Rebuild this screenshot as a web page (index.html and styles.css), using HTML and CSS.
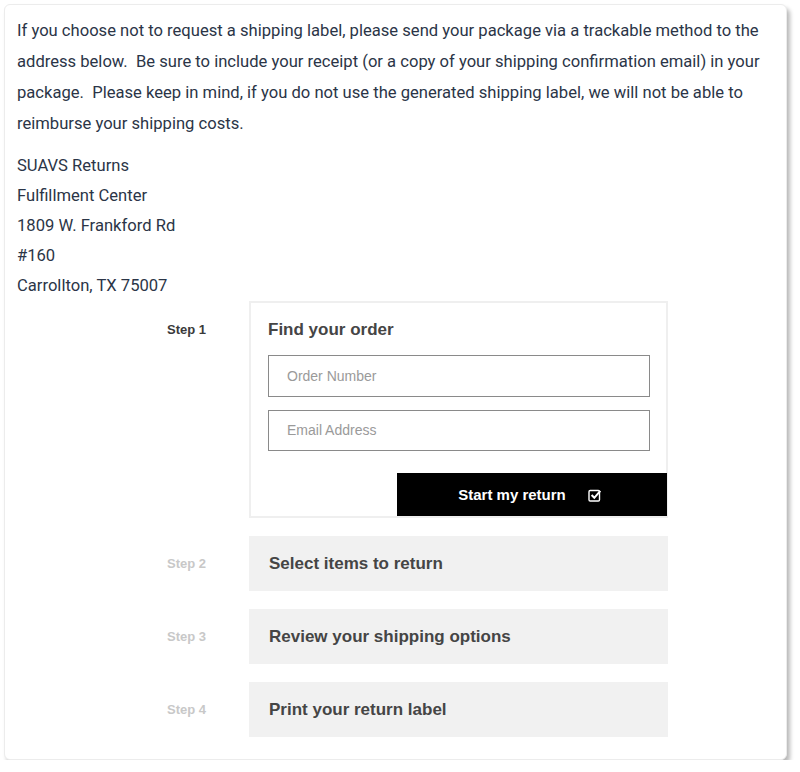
FILE: index.html
```html
<!DOCTYPE html>
<html>
<head>
<meta charset="utf-8">
<link rel="stylesheet" href="styles.css">
</head>
<body>
<div class="card">
  <p class="intro">If you choose not to request a shipping label, please send your package via a trackable method to the address below.&nbsp; Be sure to include your receipt (or a copy of your shipping confirmation email) in your package.&nbsp; Please keep in mind, if you do not use the generated shipping label, we will not be able to reimburse your shipping costs.</p>
  <p class="address">SUAVS Returns<br>Fulfillment Center<br>1809 W. Frankford Rd<br>#160<br>Carrollton, TX 75007</p>
  <div class="steps">
    <div class="step active">
      <div class="step-label">Step 1</div>
      <div class="step-box">
        <div class="step-title">Find your order</div>
        <div class="field">Order Number</div>
        <div class="field">Email Address</div>
        <div class="btn-row">
          <div class="btn">Start my return
            <svg class="chk" width="14" height="14" viewBox="0 0 14 14"><rect x="1" y="2.5" width="10.5" height="10.5" rx="1.2" fill="none" stroke="#fff" stroke-width="1.4"/><path d="M3.6 7 L6.3 9.8 L12.3 2.8" fill="none" stroke="#fff" stroke-width="2"/></svg>
          </div>
        </div>
      </div>
    </div>
    <div class="step">
      <div class="step-label">Step 2</div>
      <div class="step-box">
        <div class="step-title">Select items to return</div>
      </div>
    </div>
    <div class="step">
      <div class="step-label">Step 3</div>
      <div class="step-box">
        <div class="step-title">Review your shipping options</div>
      </div>
    </div>
    <div class="step">
      <div class="step-label">Step 4</div>
      <div class="step-box">
        <div class="step-title">Print your return label</div>
      </div>
    </div>
  </div>
</div>
</body>
</html>
```

FILE: styles.css
```css
html, body {
  margin: 0;
  padding: 0;
  background: #fff;
}
body {
  padding: 4px 0 0 4px;
}
.card {
  width: 783px;
  height: 756px;
  box-sizing: border-box;
  background: #fff;
  border: 1px solid #ececec;
  border-radius: 6px;
  box-shadow: 3px 4px 4px rgba(0, 0, 0, 0.28);
  padding: 10px 12px 0 12px;
  font-family: Roboto, "Liberation Sans", sans-serif;
  color: #2b3547;
}
.intro {
  margin: 0;
  font-size: 16.6px;
  line-height: 31px;
}
.address {
  margin: 12px 0 0;
  font-size: 16.6px;
  line-height: 30px;
}
.steps {
  margin: 0 0 0 150px;
  display: flex;
  flex-direction: column;
  gap: 18px;
  font-family: "Liberation Sans", Arial, sans-serif;
}
.step {
  display: flex;
}
.step-label {
  width: 82px;
  font-size: 13px;
  font-weight: bold;
  color: #c8c8c8;
  align-self: center;
}
.step.active .step-label {
  align-self: flex-start;
  padding-top: 21px;
  color: #3a3a3a;
}
.step-box {
  width: 419px;
  height: 55px;
  box-sizing: border-box;
  background: #f1f1f1;
  padding: 0 18px 0 20px;
  display: flex;
  flex-direction: column;
  justify-content: center;
}
.step-title {
  font-size: 17px;
  font-weight: bold;
  color: #454545;
}
.step.active .step-box {
  height: 217px;
  background: #fff;
  border: 2px solid #efefef;
  justify-content: flex-start;
  padding: 17px 16px 0 17px;
}
.field {
  height: 42px;
  box-sizing: border-box;
  border: 1px solid #8a8a8a;
  margin-top: 15px;
  padding-left: 18px;
  display: flex;
  align-items: center;
  font-size: 14px;
  color: #9a9a9a;
}
.field + .field {
  margin-top: 13px;
}
.btn-row {
  display: flex;
  justify-content: flex-end;
  margin: 22px -17px 0 0;
}
.btn {
  width: 270px;
  height: 43px;
  background: #000;
  color: #fff;
  font-size: 15px;
  font-weight: bold;
  display: flex;
  align-items: center;
  justify-content: center;
  gap: 22px;
  padding-right: 4px;
  box-sizing: border-box;
}
.chk {
  display: block;
}
```
